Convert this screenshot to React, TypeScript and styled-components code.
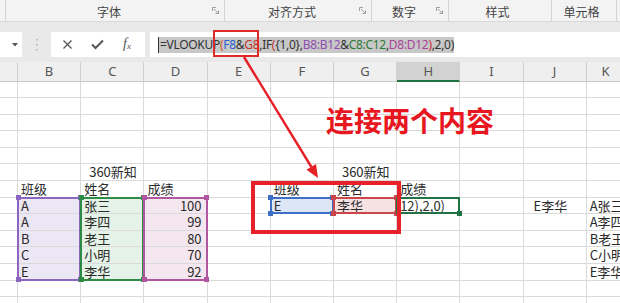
import React from "react";
import styled, { createGlobalStyle } from "styled-components";

const GlobalStyle = createGlobalStyle`
  html, body {
    margin: 0;
    padding: 0;
    background: #fff;
  }
  body {
    font-family: "Noto Sans CJK SC", "Noto Sans", sans-serif;
  }
`;

const Page = styled.div`
  position: relative;
  width: 620px;
  height: 303px;
  overflow: hidden;
  background: #fff;
`;

/* ---------- ribbon group labels ---------- */
const Ribbon = styled.div`
  display: flex;
  height: 22px;
  box-sizing: border-box;
  background: #f3f3f3;
  border-bottom: 1px solid #d9d9d9;
`;

const RibbonGroup = styled.div<{ $w?: number }>`
  display: flex;
  align-items: center;
  flex: ${(p) => (p.$w ? `0 0 ${p.$w}px` : "1")};
  box-sizing: border-box;
  border-right: 1px solid #d4d4d4;
  padding-right: 5px;
`;

const GroupLabel = styled.span`
  flex: 1;
  text-align: center;
  font-size: 12px;
  line-height: 16px;
  color: #444;
  padding-top: 3px;
`;

const Launcher = () => (
  <svg width="7" height="7" viewBox="0 0 7 7" fill="none" stroke="#a0a0a0" strokeWidth="1">
    <path d="M0.5 4V0.5H4" />
    <path d="M2 2L6.2 6.2M3.5 6.5H6.5V3.5" />
  </svg>
);

/* ---------- formula bar ---------- */
const FormulaRow = styled.div`
  display: flex;
  align-items: center;
  height: 40px;
  box-sizing: border-box;
  padding-top: 5px;
  background: #e9e9e9;
`;

const NameBox = styled.div`
  width: 22px;
  height: 25px;
  background: #fff;
  display: flex;
  align-items: center;
  justify-content: flex-end;
  padding-right: 4px;
  box-sizing: border-box;
`;

const Grip = styled.div`
  width: 29px;
  display: flex;
  justify-content: center;
`;

const ButtonBox = styled.div`
  width: 94px;
  height: 25px;
  background: #fff;
  display: grid;
  grid-template-columns: repeat(3, 30px);
  padding-left: 1px;
  box-sizing: border-box;
  align-items: center;
  justify-items: center;
`;

const Fx = styled.span`
  font-family: "Liberation Serif", serif;
  font-style: italic;
  font-size: 14px;
  line-height: 16px;
  color: #555;
  sub {
    font-size: 9px;
    vertical-align: -1px;
  }
`;

const FormulaBox = styled.div`
  flex: 1;
  height: 25px;
  margin-left: 5px;
  background: #fff;
  display: flex;
  align-items: center;
  padding-left: 8px;
  font-family: "Noto Sans", sans-serif;
  font-size: 12px;
  letter-spacing: -0.3px;
  white-space: nowrap;
`;

const Selected = styled.span`
  background: #c8c8c8;
  line-height: 16px;
  color: #333;
  border-left: 1px solid #333;
  padding-left: 1px;
`;

const Tok = styled.span<{ $c: string }>`
  color: ${(p) => p.$c};
`;

/* ---------- grid ---------- */
const Sheet = styled.div`
  display: grid;
  grid-template-columns: 18px repeat(9, 63.2px) 1fr;
  grid-template-rows: 19.5px repeat(14, 16.6px);
`;

const HeaderCell = styled.div<{ $col: number; $active?: boolean }>`
  grid-column: ${(p) => p.$col};
  grid-row: 1;
  background: ${(p) => (p.$active ? "#d2d2d2" : "#efefef")};
  border-right: 1px solid #d0d0d0;
  border-bottom: ${(p) => (p.$active ? "2px solid #217346" : "1px solid #c8c8c8")};
  font-family: "Noto Sans", sans-serif;
  font-size: 13px;
  color: #555;
  text-align: center;
  line-height: 18px;
`;

const Cell = styled.div<{ $col: number; $row: number; $fill?: string; $right?: boolean; $indent?: number }>`
  grid-column: ${(p) => p.$col};
  grid-row: ${(p) => p.$row};
  background: ${(p) => p.$fill ?? "#fff"};
  border-right: 1px solid #dadada;
  border-bottom: 1px solid #dadada;
  font-size: 13px;
  line-height: 16px;
  color: #2a2a2a;
  white-space: nowrap;
  text-align: ${(p) => (p.$right ? "right" : "left")};
  padding: ${(p) => (p.$right ? "0 5px 0 0" : `0 0 0 ${p.$indent ?? 3}px`)};
`;

const RangeFrame = styled.div<{ $col: number; $from: number; $to: number; $color: string }>`
  grid-column: ${(p) => p.$col};
  grid-row: ${(p) => p.$from} / ${(p) => p.$to};
  position: relative;
  margin: -1px 0 0 -1px;
  border: 2px solid ${(p) => p.$color};
  z-index: 2;
  pointer-events: none;
`;

const Handle = styled.span<{ $x: "l" | "r"; $y: "t" | "b"; $color: string }>`
  position: absolute;
  width: 5px;
  height: 5px;
  background: ${(p) => p.$color};
  ${(p) => (p.$x === "l" ? "left: -3.5px;" : "right: -3.5px;")}
  ${(p) => (p.$y === "t" ? "top: -3.5px;" : "bottom: -3.5px;")}
`;

/* ---------- annotations ---------- */
const FormulaMark = styled.div`
  position: absolute;
  left: 213px;
  top: 30px;
  width: 46px;
  height: 27px;
  box-sizing: border-box;
  border: 2px solid #e02a2a;
  z-index: 4;
`;

const CalloutBox = styled.div`
  position: absolute;
  left: 251px;
  top: 181px;
  width: 150px;
  height: 53px;
  box-sizing: border-box;
  border: 4px solid #e8202a;
  z-index: 4;
`;

const Callout = styled.div`
  position: absolute;
  left: 326px;
  top: 102px;
  font-size: 28px;
  line-height: 36px;
  font-weight: 700;
  color: #e8161e;
  z-index: 4;
  white-space: nowrap;
`;

const ArrowLayer = styled.svg`
  position: absolute;
  left: 0;
  top: 0;
  z-index: 5;
  pointer-events: none;
`;

type CellDef = { text: string; right?: boolean; indent?: number };

const PURPLE_FILL = "#ece7f5";
const GREEN_FILL = "#e4f2e7";
const PINK_FILL = "#f5e7ef";

const data: Record<string, CellDef> = {
  "5-3": { text: "360新知", indent: 8 },
  "5-7": { text: "360新知", indent: 8 },
  "6-2": { text: "班级" },
  "6-3": { text: "姓名" },
  "6-4": { text: "成绩" },
  "6-6": { text: "班级" },
  "6-7": { text: "姓名" },
  "6-8": { text: "成绩" },
  "7-2": { text: "A" },
  "7-3": { text: "张三" },
  "7-4": { text: "100", right: true },
  "7-6": { text: "E" },
  "7-7": { text: "李华" },
  "7-8": { text: "12),2,0)" },
  "7-10": { text: "E李华", indent: 10 },
  "7-11": { text: "A张三" },
  "8-2": { text: "A" },
  "8-3": { text: "李四" },
  "8-4": { text: "99", right: true },
  "8-11": { text: "A李四" },
  "9-2": { text: "B" },
  "9-3": { text: "老王" },
  "9-4": { text: "80", right: true },
  "9-11": { text: "B老王" },
  "10-2": { text: "C" },
  "10-3": { text: "小明" },
  "10-4": { text: "70", right: true },
  "10-11": { text: "C小明" },
  "11-2": { text: "E" },
  "11-3": { text: "李华" },
  "11-4": { text: "92", right: true },
  "11-11": { text: "E李华" },
};

const fillFor = (r: number, c: number) => {
  if (r >= 7 && r <= 11) {
    if (c === 2) return PURPLE_FILL;
    if (c === 3) return GREEN_FILL;
    if (c === 4) return PINK_FILL;
  }
  if (r === 7 && c === 6) return "#dce6f5";
  if (r === 7 && c === 7) return "#f6e2e2";
  return undefined;
};

const ranges = [
  { col: 2, from: 7, to: 11, color: "#8a66c0", corners: true },
  { col: 3, from: 7, to: 11, color: "#2e8b45", corners: true },
  { col: 4, from: 7, to: 11, color: "#b0579f", corners: true },
  { col: 6, from: 7, to: 7, color: "#3f6fc5", corners: true },
  { col: 7, from: 7, to: 7, color: "#c9474a", corners: true },
  { col: 8, from: 7, to: 7, color: "#217346", corners: false },
];

const COLS = ["A", "B", "C", "D", "E", "F", "G", "H", "I", "J", "K"];

export default function App() {
  const rows = Array.from({ length: 14 }, (_, i) => i);

  return (
    <Page>
      <GlobalStyle />
      <Ribbon>
        <RibbonGroup $w={4} />
        <RibbonGroup $w={219}>
          <GroupLabel>字体</GroupLabel>
          <Launcher />
        </RibbonGroup>
        <RibbonGroup $w={147}>
          <GroupLabel>对齐方式</GroupLabel>
          <Launcher />
        </RibbonGroup>
        <RibbonGroup $w={77}>
          <GroupLabel>数字</GroupLabel>
          <Launcher />
        </RibbonGroup>
        <RibbonGroup $w={103}>
          <GroupLabel>样式</GroupLabel>
        </RibbonGroup>
        <RibbonGroup $w={65}>
          <GroupLabel>单元格</GroupLabel>
        </RibbonGroup>
        <RibbonGroup />
      </Ribbon>

      <FormulaRow>
        <NameBox>
          <svg width="6" height="4" viewBox="0 0 6 4">
            <path d="M0 0H6L3 3.5Z" fill="#555" />
          </svg>
        </NameBox>
        <Grip>
          <svg width="3" height="14" viewBox="0 0 3 14" fill="#b0b0b0">
            <rect x="1" y="1" width="1.5" height="1.5" />
            <rect x="1" y="6" width="1.5" height="1.5" />
            <rect x="1" y="11" width="1.5" height="1.5" />
          </svg>
        </Grip>
        <ButtonBox>
          <svg width="11" height="11" viewBox="0 0 11 11" stroke="#555" strokeWidth="1.3">
            <path d="M1.5 1.5L9.5 9.5M9.5 1.5L1.5 9.5" />
          </svg>
          <svg width="13" height="11" viewBox="0 0 13 11" fill="none" stroke="#555" strokeWidth="2">
            <path d="M1 5.5L4.5 9L12 1.5" />
          </svg>
          <Fx>
            f<sub>x</sub>
          </Fx>
        </ButtonBox>
        <FormulaBox>
          <Selected>
            <Tok $c="#333">=VLOOKUP</Tok>
            <Tok $c="#d0502a">(</Tok>
            <Tok $c="#2f5fd0">F8</Tok>
            <Tok $c="#333">&amp;</Tok>
            <Tok $c="#c0392b">G8</Tok>
            <Tok $c="#333">,IF</Tok>
            <Tok $c="#c03030">(</Tok>
            <Tok $c="#333">{"{1,0},"}</Tok>
            <Tok $c="#8f4fb0">B8:B12</Tok>
            <Tok $c="#333">&amp;</Tok>
            <Tok $c="#2a7a35">C8:C12</Tok>
            <Tok $c="#333">,</Tok>
            <Tok $c="#a8449a">D8:D12</Tok>
            <Tok $c="#c03030">)</Tok>
            <Tok $c="#333">,2,0)</Tok>
          </Selected>
        </FormulaBox>
      </FormulaRow>

      <Sheet>
        {COLS.map((c, i) => (
          <HeaderCell key={c} $col={i + 1} $active={c === "H"}>
            {i === 0 ? "" : c}
          </HeaderCell>
        ))}
        {rows.map((r) =>
          COLS.map((_, ci) => {
            const c = ci + 1;
            const d = data[`${r}-${c}`];
            return (
              <Cell
                key={`${r}-${c}`}
                $row={r + 2}
                $col={c}
                $fill={fillFor(r, c)}
                $right={d?.right}
                $indent={d?.indent}
              >
                {d?.text}
              </Cell>
            );
          })
        )}
        {ranges.map((g) => (
          <RangeFrame key={g.col} $col={g.col} $from={g.from + 2} $to={g.to + 3} $color={g.color}>
            {g.corners ? (
              <>
                <Handle $x="l" $y="t" $color={g.color} />
                <Handle $x="r" $y="t" $color={g.color} />
                <Handle $x="l" $y="b" $color={g.color} />
                <Handle $x="r" $y="b" $color={g.color} />
              </>
            ) : (
              <Handle $x="r" $y="b" $color={g.color} />
            )}
          </RangeFrame>
        ))}
      </Sheet>

      <FormulaMark />
      <CalloutBox />
      <Callout>连接两个内容</Callout>
      <ArrowLayer width="620" height="303" viewBox="0 0 620 303">
        <line x1="244" y1="57" x2="312" y2="168" stroke="#e52027" strokeWidth="2.4" />
        <polygon points="318,178 306.5,169.8 316,164" fill="#e52027" />
      </ArrowLayer>
    </Page>
  );
}
